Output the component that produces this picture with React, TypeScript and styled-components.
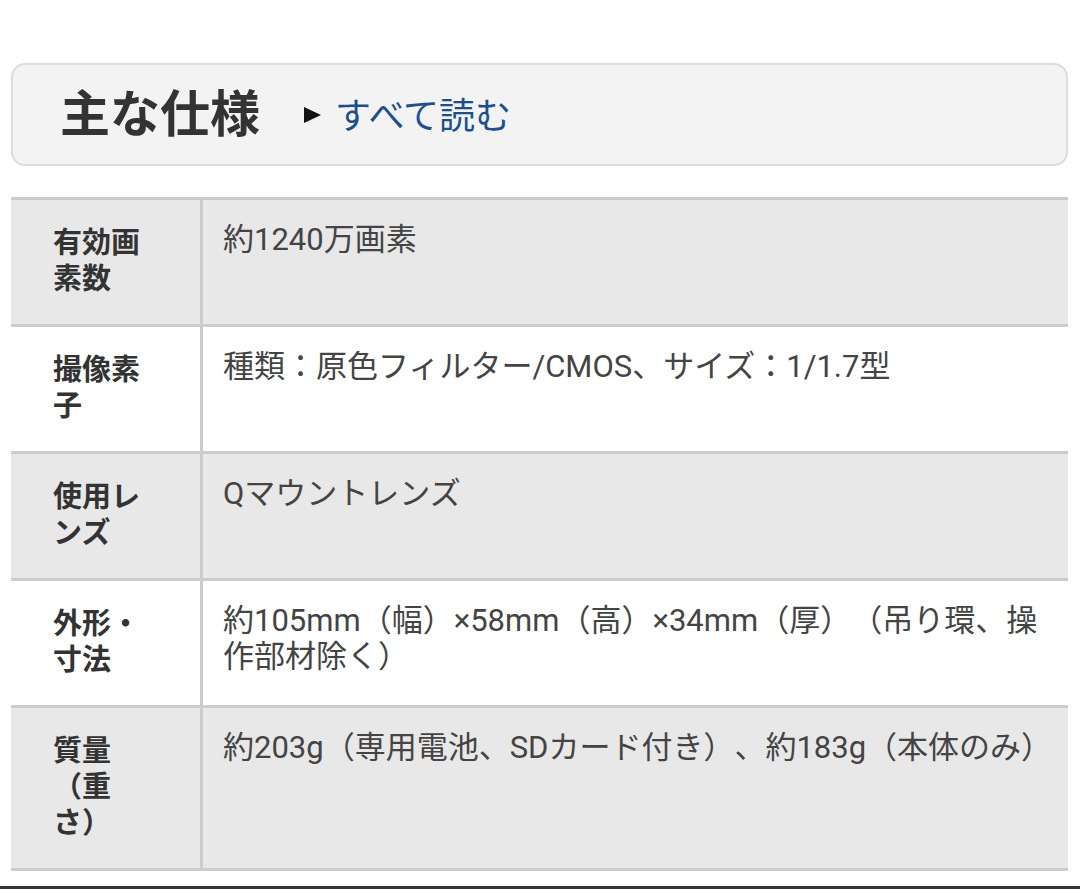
import { createGlobalStyle, styled } from "styled-components";

const GlobalStyle = createGlobalStyle`
  html, body {
    margin: 0;
    padding: 0;
    background: #ffffff;
  }
  body {
    font-family: Roboto, "Noto Sans CJK JP", sans-serif;
    text-spacing-trim: space-all;
  }
`;

interface SpecItem {
  label: string;
  value: string;
}

const specs: SpecItem[] = [
  { label: "有効画素数", value: "約1240万画素" },
  { label: "撮像素子", value: "種類：原色フィルター/CMOS、サイズ：1/1.7型" },
  { label: "使用レンズ", value: "Qマウントレンズ" },
  { label: "外形・寸法", value: "約105mm（幅）×58mm（高）×34mm（厚）（吊り環、操作部材除く）" },
  { label: "質量（重さ）", value: "約203g（専用電池、SDカード付き）、約183g（本体のみ）" },
];

const App = () => {
  return (
    <Page>
      <GlobalStyle />
      <HeaderBox>
        <Title>主な仕様</Title>
        <ReadAll href="#">
          <Arrow />
          <span>すべて読む</span>
        </ReadAll>
      </HeaderBox>
      <SpecTable>
        {specs.map((spec, i) => (
          <Row key={spec.label} striped={i % 2 === 0}>
            <Label>{spec.label}</Label>
            <Value>{spec.value}</Value>
          </Row>
        ))}
      </SpecTable>
      <BottomRule />
    </Page>
  );
};

export default App;

const Page = styled.div`
  width: 1080px;
  height: 889px;
  padding: 63px 12px 0 11px;
  box-sizing: border-box;
  display: flex;
  flex-direction: column;
  overflow: hidden;
`;

const HeaderBox = styled.div`
  height: 103px;
  box-sizing: border-box;
  border: 2px solid #dddddd;
  border-radius: 14px;
  background: #f3f3f3;
  display: flex;
  align-items: center;
  padding-left: 47px;
  gap: 44px;
`;

const Title = styled.h2`
  margin: -10px 0 0;
  font-family: "Noto Sans CJK JP", sans-serif;
  font-size: 50px;
  font-weight: 700;
  color: #333333;
  line-height: 1;
`;

const ReadAll = styled.a`
  display: flex;
  align-items: center;
  gap: 14px;
  color: #1d4f8f;
  text-decoration: none;
  font-family: "Noto Sans CJK JP", sans-serif;
  font-size: 36px;
  line-height: 1;
  margin-top: -4px;
`;

const Arrow = styled.span`
  width: 0;
  height: 0;
  margin-top: 4px;
  border-top: 8px solid transparent;
  border-bottom: 8px solid transparent;
  border-left: 17px solid #111111;
`;

const SpecTable = styled.div`
  margin-top: 31px;
  border-top: 3px solid #cccccc;
  display: flex;
  flex-direction: column;
`;

const Row = styled.div<{ striped: boolean }>`
  display: grid;
  grid-template-columns: 192px 1fr;
  background: ${(props) => (props.striped ? "#e8e8e8" : "#ffffff")};
  border-bottom: 3px solid #cccccc;
`;

const Label = styled.div`
  box-sizing: border-box;
  border-right: 3px solid #cccccc;
  padding: 22px 42px 30px 42px;
  font-family: "Noto Sans CJK JP", sans-serif;
  font-size: 29px;
  font-weight: 700;
  line-height: 36px;
  color: #333333;
`;

const Value = styled.div`
  padding: 22px 8px 30px 20px;
  font-size: 31px;
  line-height: 36px;
  color: #444444;
`;

const BottomRule = styled.div`
  margin: auto -12px 0 -11px;
  height: 3px;
  background: #333333;
`;
